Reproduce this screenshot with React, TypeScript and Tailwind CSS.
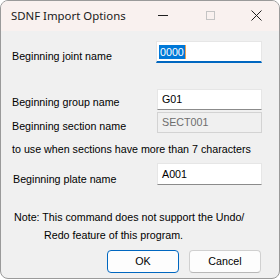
import React from 'react';

const body = "font-['Liberation_Sans',Arial,sans-serif] text-[10.7px] text-black";

const Field: React.FC<{ value: string; disabled?: boolean }> = ({ value, disabled }) => {
  if (disabled) {
    return (
      <div className="w-[105px] h-[21px] border border-[#d3d3d3] bg-[#f0f0f0] flex items-center pl-[4px] text-[#6d6d6d]">
        {value}
      </div>
    );
  }
  return (
    <div className="w-[105px] h-[21px] bg-white border-x border-t border-[#e6e6e6] border-b border-b-[#8b8b8b] flex items-center pl-[4px]">
      {value}
    </div>
  );
};

const App: React.FC = () => {
  return (
    <div className="w-[280px] h-[279px] bg-white">
      <div className="w-[280px] h-[279px] rounded-[8px] border border-[#9a9a9a] overflow-hidden flex flex-col bg-[#f0f0f0]">
        {/* title bar */}
        <div className="h-[30px] bg-[#f9f1ef] flex items-center relative shrink-0">
          <span className="ml-[10px] font-['Noto_Sans',sans-serif] text-[11.4px] text-[#1a1a1a] leading-none">
            SDNF Import Options
          </span>
          <div className="absolute left-[157px] top-[14px] w-[10px] h-px bg-[#1f1f1f]" />
          <div className="absolute left-[205px] top-[10px] w-[9px] h-[9px] border border-[#c4c4c4]" />
          <svg className="absolute left-[250px] top-[9px]" width="11" height="11" viewBox="0 0 11 11">
            <path d="M0.5 0.5 L10.5 10.5 M10.5 0.5 L0.5 10.5" stroke="#1f1f1f" strokeWidth="1" />
          </svg>
        </div>

        <div className={`${body} flex flex-col pl-[11px]`}>
          {/* joint */}
          <div className="flex mt-[10px] h-[22px]">
            <span className="w-[144px] pt-[7px]">Beginning joint name</span>
            <div className="w-[106px] h-[22px] bg-white border-x border-t border-[#e6e6e6] border-b-2 border-b-[#0067c0] flex items-center pl-[2px]">
              <span className="bg-[#0078d7] text-white px-[1px] leading-[14px]">0000</span>
              <span className="w-px h-[14px] bg-[#f0a050]" />
            </div>
          </div>

          {/* group */}
          <div className="flex mt-[26px] h-[21px]">
            <span className="w-[145px] pt-[5px]">Beginning group name</span>
            <Field value="G01" />
          </div>

          {/* section */}
          <div className="flex mt-[2px] h-[21px]">
            <span className="w-[145px] pt-[6px]">Beginning section name</span>
            <Field value="SECT001" disabled />
          </div>

          <div className="mt-[9px] leading-[14px]">to use when sections have more than 7 characters</div>

          {/* plate */}
          <div className="flex mt-[7px] h-[22px]">
            <span className="w-[145px] pt-[8px] pl-[1px]">Beginning plate name</span>
            <div className="w-[105px] h-[22px] bg-white border-x border-t border-[#e6e6e6] border-b border-b-[#8b8b8b] flex items-center pl-[4px]">
              A001
            </div>
          </div>

          {/* note */}
          <div className="mt-[23px] leading-[18px] pl-[2px]">
            <div>Note: This command does not support the Undo/</div>
            <div className="pl-[30px]">Redo feature of this program.</div>
          </div>

          {/* buttons */}
          <div className="flex mt-[6px] pl-[95px] gap-[10px]">
            <button className="w-[72px] h-[23px] rounded-[4px] border border-[#0067c0] bg-[#fdfdfd] text-black">
              OK
            </button>
            <button className="w-[72px] h-[23px] rounded-[4px] border border-[#d0d0d0] border-b-[#b8b8b8] bg-[#fdfdfd] text-black">
              Cancel
            </button>
          </div>
        </div>
      </div>
    </div>
  );
};

export default App;
